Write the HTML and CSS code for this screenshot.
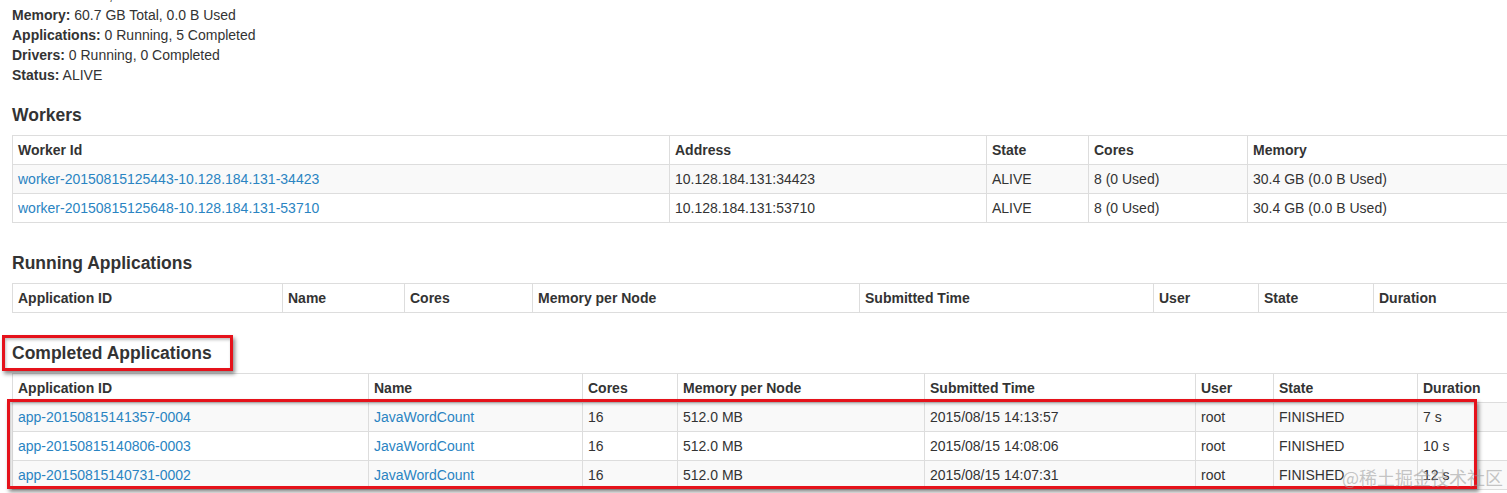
FILE: index.html
```html
<!DOCTYPE html>
<html>
<head>
<meta charset="utf-8">
<link rel="stylesheet" href="styles.css">
</head>
<body>
<div class="page">
  <ul class="summary">
    <li><strong>Cores:</strong> 16 Total, 0 Used</li>
    <li><strong>Memory:</strong> 60.7 GB Total, 0.0 B Used</li>
    <li><strong>Applications:</strong> 0 Running, 5 Completed</li>
    <li><strong>Drivers:</strong> 0 Running, 0 Completed</li>
    <li><strong>Status:</strong> ALIVE</li>
  </ul>

  <h4>Workers</h4>
  <table class="grid workers">
    <colgroup>
      <col class="c657"><col class="c317"><col class="c102"><col class="c159"><col class="c300">
    </colgroup>
    <thead>
      <tr><th>Worker Id</th><th>Address</th><th>State</th><th>Cores</th><th>Memory</th></tr>
    </thead>
    <tbody>
      <tr><td><a href="#">worker-20150815125443-10.128.184.131-34423</a></td><td>10.128.184.131:34423</td><td>ALIVE</td><td>8 (0 Used)</td><td>30.4 GB (0.0 B Used)</td></tr>
      <tr><td><a href="#">worker-20150815125648-10.128.184.131-53710</a></td><td>10.128.184.131:53710</td><td>ALIVE</td><td>8 (0 Used)</td><td>30.4 GB (0.0 B Used)</td></tr>
    </tbody>
  </table>

  <h4>Running Applications</h4>
  <table class="grid running">
    <colgroup>
      <col class="c270"><col class="c122"><col class="c128"><col class="c327"><col class="c294"><col class="c105"><col class="c115"><col class="c200">
    </colgroup>
    <thead>
      <tr><th>Application ID</th><th>Name</th><th>Cores</th><th>Memory per Node</th><th>Submitted Time</th><th>User</th><th>State</th><th>Duration</th></tr>
    </thead>
    <tbody></tbody>
  </table>

  <h4>Completed Applications</h4>
  <table class="grid completed">
    <colgroup>
      <col class="c356"><col class="c214"><col class="c95"><col class="c247"><col class="c271"><col class="c78"><col class="c144"><col class="c200">
    </colgroup>
    <thead>
      <tr><th>Application ID</th><th>Name</th><th>Cores</th><th>Memory per Node</th><th>Submitted Time</th><th>User</th><th>State</th><th>Duration</th></tr>
    </thead>
    <tbody>
      <tr><td><a href="#">app-20150815141357-0004</a></td><td><a href="#">JavaWordCount</a></td><td>16</td><td>512.0 MB</td><td>2015/08/15 14:13:57</td><td>root</td><td>FINISHED</td><td>7 s</td></tr>
      <tr><td><a href="#">app-20150815140806-0003</a></td><td><a href="#">JavaWordCount</a></td><td>16</td><td>512.0 MB</td><td>2015/08/15 14:08:06</td><td>root</td><td>FINISHED</td><td>10 s</td></tr>
      <tr><td><a href="#">app-20150815140731-0002</a></td><td><a href="#">JavaWordCount</a></td><td>16</td><td>512.0 MB</td><td>2015/08/15 14:07:31</td><td>root</td><td>FINISHED</td><td>12 s</td></tr>
    </tbody>
  </table>
</div>

<div class="mark mark-heading"></div>
<div class="mark mark-rows"></div>
<div class="watermark">@稀土掘金技术社区</div>
</body>
</html>
```

FILE: styles.css
```css
html {
  overflow: hidden;
}
body {
  margin: 0;
  font-family: "Liberation Sans", Arial, Helvetica, sans-serif;
  font-size: 14px;
  line-height: 20px;
  color: #333333;
  background: #ffffff;
}
.page {
  padding: 0 0 0 12px;
  width: 1700px;
}
.summary {
  list-style: none;
  margin: -15px 0 20px 0;
  padding: 0;
}
.summary strong {
  font-weight: bold;
}
h4 {
  font-size: 17.5px;
  line-height: 20px;
  font-weight: bold;
  margin: 0 0 10px 0;
  color: #333333;
}
a {
  color: #2a84c2;
  text-decoration: none;
}
.grid {
  border-collapse: collapse;
  table-layout: fixed;
  margin-bottom: 30px;
  border: 1px solid #dddddd;
}
.grid th,
.grid td {
  padding: 4px 5px;
  line-height: 20px;
  text-align: left;
  vertical-align: top;
  border: 1px solid #dddddd;
  white-space: nowrap;
  overflow: hidden;
}
.grid th {
  font-weight: bold;
}
.grid tbody tr:nth-child(odd) td {
  background: #f9f9f9;
}
.workers { width: 1535px; }
.running { width: 1561px; }
.completed { width: 1605px; }

.c657 { width: 657px; }
.c317 { width: 317px; }
.c102 { width: 102px; }
.c159 { width: 159px; }
.c300 { width: 300px; }
.c270 { width: 270px; }
.c122 { width: 122px; }
.c128 { width: 128px; }
.c327 { width: 327px; }
.c294 { width: 294px; }
.c105 { width: 105px; }
.c115 { width: 115px; }
.c200 { width: 200px; }
.c356 { width: 356px; }
.c214 { width: 214px; }
.c95 { width: 95px; }
.c247 { width: 247px; }
.c271 { width: 271px; }
.c78 { width: 78px; }
.c144 { width: 144px; }

.mark {
  position: absolute;
  border: 3px solid #e5121b;
  box-shadow: 2px 3px 4px rgba(0, 0, 0, 0.45), inset 1px 2px 3px rgba(0, 0, 0, 0.25);
  box-sizing: border-box;
}
.mark-heading {
  left: 2px;
  top: 335px;
  width: 231px;
  height: 36px;
}
.mark-rows {
  left: 7px;
  top: 399px;
  width: 1470px;
  height: 90px;
}
.watermark {
  position: absolute;
  left: 1342px;
  top: 465px;
  font-family: "Noto Sans CJK SC", sans-serif;
  font-size: 18px;
  line-height: 24px;
  color: rgba(150, 150, 150, 0.55);
  white-space: nowrap;
}
```
